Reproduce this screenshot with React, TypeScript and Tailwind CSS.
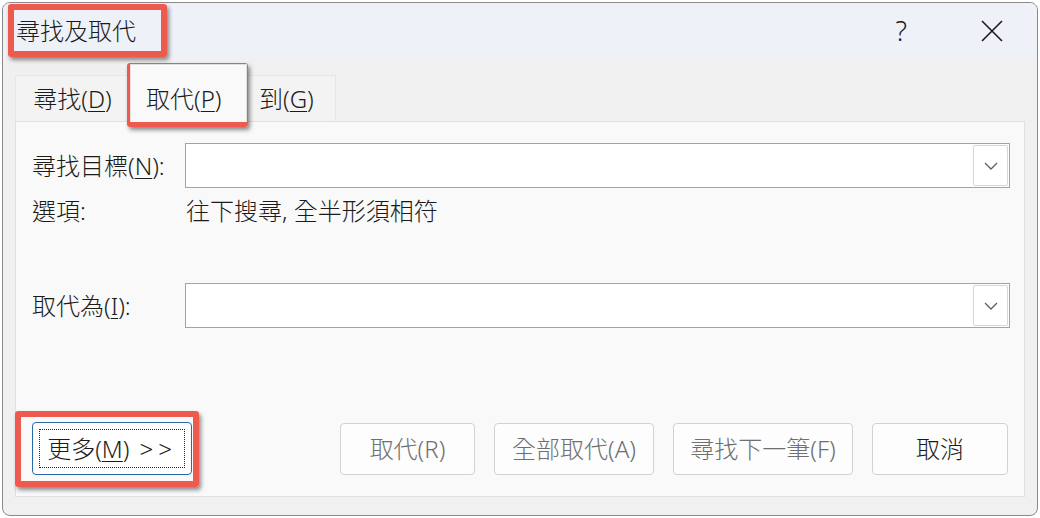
import React from "react"

const font = "font-['Noto_Sans','Noto_Sans_CJK_TC',sans-serif]"

function Chevron() {
  return (
    <svg width="14" height="8" viewBox="0 0 14 8" fill="none">
      <path d="M1 1l6 6 6-6" stroke="#5f5f5f" strokeWidth="1.3" />
    </svg>
  )
}

function Combo() {
  return (
    <div className="flex h-[45px] flex-1 border border-[#a3a3a3] bg-white p-px">
      <div className="flex-1" />
      <div className="flex w-[35px] items-center justify-center rounded-[2px] border border-[#d6d6d6] bg-white">
        <Chevron />
      </div>
    </div>
  )
}

function Key({ k }: { k: string }) {
  return <span className="underline decoration-1 underline-offset-[3px]">{k}</span>
}

function Btn({ label, w, disabled }: { label: string; w: string; disabled?: boolean }) {
  return (
    <div
      className={`flex h-[52px] ${w} items-center justify-center rounded-[4px] border border-[#d2d2d2] bg-[#fdfdfd] ${
        disabled ? "text-[#6f6f6f]" : "text-[#1b1b1b]"
      }`}
    >
      {label}
    </div>
  )
}

function RedBox({ pos }: { pos: string }) {
  return (
    <div
      className={`absolute ${pos} rounded-[3px] border-[6px] border-[#ef5a4e] shadow-[2px_3px_4px_rgba(0,0,0,0.45)]`}
    />
  )
}

export default function App() {
  return (
    <div className={`relative h-[518px] w-[1040px] overflow-hidden bg-white text-[24px] font-light text-[#1b1b1b] ${font}`}>
      {/* dialog window */}
      <div className="ml-[2px] mt-[2px] flex h-[514px] w-[1036px] flex-col overflow-hidden rounded-[8px] border border-[#8a8a8a] bg-[#f0f0f0]">
        {/* title bar */}
        <div className="flex h-[55px] shrink-0 items-center bg-[#eef2f8] pl-[13px]">
          <span className="leading-none">尋找及取代</span>
          <span className="ml-auto mr-[74px] text-[27px] leading-none">?</span>
          <svg width="22" height="22" viewBox="0 0 22 22" className="mr-[34px]">
            <path d="M1 1l20 20M21 1L1 21" stroke="#1b1b1b" strokeWidth="1.6" />
          </svg>
        </div>

        {/* body */}
        <div className="flex flex-1 flex-col pb-[18px] pl-[12px] pr-[12px]">
          {/* tabs */}
          <div className="flex h-[63px] shrink-0 items-end">
            <div className="flex h-[46px] w-[115px] items-center justify-center border border-b-0 border-[#e6e6e6] bg-[#f3f3f3]">
              尋找(<Key k="D" />)
            </div>
            <div className="relative z-10 -mb-px flex h-[58px] w-[117px] items-center border border-b-0 border-[#e0e0e0] bg-[#f9f9f9] pl-[15px] pt-[10px]">
              取代(<Key k="P" />)
            </div>
            <div className="flex h-[46px] w-[89px] items-center border border-b-0 border-l-0 border-[#e6e6e6] bg-[#f3f3f3] pl-[12px]">
              到(<Key k="G" />)
            </div>
          </div>

          {/* panel */}
          <div className="flex flex-1 flex-col border border-[#e0e0e0] bg-[#f9f9f9] pl-[16px] pr-[14px] pt-[21px]">
            <div className="flex items-center">
              <div className="w-[153px]">
                尋找目標(<Key k="N" />):
              </div>
              <Combo />
            </div>
            <div className="flex h-[46px] items-center">
              <div className="w-[154px]">選項:</div>
              <div>往下搜尋, 全半形須相符</div>
            </div>
            <div className="mt-[49px] flex items-center">
              <div className="w-[153px]">
                取代為(<Key k="I" />):
              </div>
              <Combo />
            </div>

            <div className="mr-[2px] mt-[94px] flex items-center">
              <div className="flex h-[53px] w-[160px] items-center justify-center rounded-[4px] border border-[#2a6aa8] bg-white p-[6px]">
                <div className="flex h-full w-full items-center justify-center border border-dotted border-[#222]">
                  更多(<Key k="M" />)<span className="ml-[10px] tracking-[5px]">&gt;&gt;</span>
                </div>
              </div>
              <div className="ml-auto flex gap-[19px]">
                <Btn label="取代(R)" w="w-[135px]" disabled />
                <Btn label="全部取代(A)" w="w-[160px]" disabled />
                <Btn label="尋找下一筆(F)" w="w-[180px]" disabled />
                <Btn label="取消" w="w-[136px]" />
              </div>
            </div>
          </div>
        </div>
      </div>

      {/* annotation highlights */}
      <RedBox pos="left-[8px] top-[4px] h-[53px] w-[159px]" />
      <RedBox pos="left-[127px] top-[63px] h-[64px] w-[121px]" />
      <RedBox pos="left-[15px] top-[411px] h-[76px] w-[184px]" />
    </div>
  )
}
